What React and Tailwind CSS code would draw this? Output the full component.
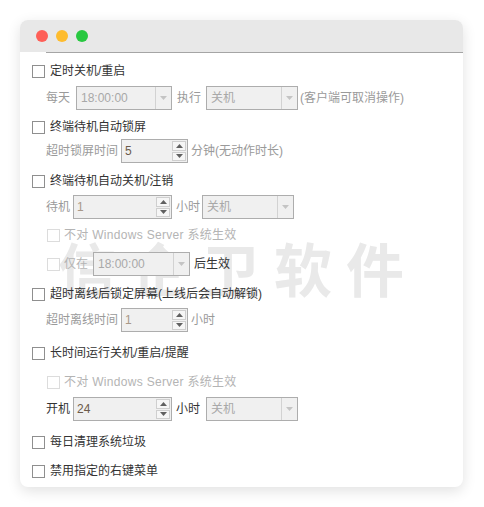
const font = { fontFamily: '"Liberation Sans", "Noto Sans CJK SC", sans-serif' };

function Check({ disabled = false }) {
  return (
    <span
      className={`inline-block w-[13px] h-[13px] shrink-0 border bg-white ${
        disabled ? "border-[#dcdcdc]" : "border-[#8f8f8f]"
      }`}
    />
  );
}

function Arrow({ up = false, color = "#b5b5b5" }) {
  return (
    <svg width="7" height="4" viewBox="0 0 7 4" className="block">
      <path d={up ? "M0 4 L3.5 0 L7 4 Z" : "M0 0 L7 0 L3.5 4 Z"} fill={color} />
    </svg>
  );
}

function Select({ value, width }) {
  return (
    <div
      className="flex h-[24px] items-stretch border border-[#adadad] bg-[#f0f0f0]"
      style={{ width }}
    >
      <div className="flex flex-1 items-center pl-[4px] text-[12px] text-[#a8a8a8]">{value}</div>
      <div className="flex w-[16px] items-center justify-center border-l border-[#d2d2d2]">
        <Arrow color="#c4c4c4" />
      </div>
    </div>
  );
}

function Spin({ value, width, dark = false }) {
  return (
    <div
      className="flex h-[24px] items-stretch border border-[#adadad] bg-[#f0f0f0]"
      style={{ width }}
    >
      <div
        className={`flex flex-1 items-center pl-[3px] text-[12px] ${
          dark ? "text-[#6b5a4a]" : "text-[#a89888]"
        }`}
      >
        {value}
      </div>
      <div className="flex w-[15px] flex-col justify-center gap-[1px] py-[1px] pr-[1px]">
        <div className="flex flex-1 items-center justify-center border border-[#cfcfcf] bg-[#f6f6f6]">
          <Arrow up color="#606060" />
        </div>
        <div className="flex flex-1 items-center justify-center border border-[#cfcfcf] bg-[#f6f6f6]">
          <Arrow color="#606060" />
        </div>
      </div>
    </div>
  );
}

function CheckRow({ label, className = "" }) {
  return (
    <div className={`flex h-[24px] items-center pl-[12px] ${className}`}>
      <Check />
      <span className="ml-[5px] text-[12px] text-[#333]">{label}</span>
    </div>
  );
}

function SubCheck({ label, className = "" }) {
  return (
    <div className={`flex h-[24px] items-center pl-[27px] ${className}`}>
      <Check disabled />
      <span className="ml-[4px] text-[12px] tracking-[0.3px] text-[#b4b4b4]">{label}</span>
    </div>
  );
}

export default function App() {
  return (
    <div className="min-h-[507px] w-[484px] bg-white pt-[20px] pl-[20px]" style={font}>
      <div className="relative w-[443px] overflow-hidden rounded-[8px] bg-white shadow-[0_4px_14px_rgba(0,0,0,0.12)]">
        {/* title bar */}
        <div className="flex h-[32px] items-center gap-[8px] bg-[#e8e8e8] pl-[16px]">
          <span className="h-[12px] w-[12px] rounded-full bg-[#fe5f57]" />
          <span className="h-[12px] w-[12px] rounded-full bg-[#febc2e]" />
          <span className="h-[12px] w-[12px] rounded-full bg-[#28c840]" />
        </div>
        <div className="ml-[26px] h-px bg-[#a5a5a5]" />

        {/* watermark */}
        <div
          className="pointer-events-none absolute left-[38px] top-[218px] select-none whitespace-nowrap text-[58px] font-bold leading-none tracking-[14px] text-[#e9e9e9]"
          style={{ fontFamily: '"Noto Sans CJK SC", sans-serif' }}
        >
          信企卫软件
        </div>

        <div className="relative flex flex-col pb-[4px] pt-[6px]">
          <CheckRow label="定时关机/重启" />

          <div className="mt-[3px] flex h-[24px] items-center pl-[26px] text-[12px] text-[#9a9a9a]">
            <span>每天</span>
            <div className="ml-[6px]">
              <Select value="18:00:00" width={96} />
            </div>
            <span className="ml-[5px]">执行</span>
            <div className="ml-[5px]">
              <Select value="关机" width={92} />
            </div>
            <span className="ml-[2px]">(客户端可取消操作)</span>
          </div>

          <CheckRow label="终端待机自动锁屏" className="mt-[5px]" />

          <div className="flex h-[24px] items-center pl-[26px] text-[12px] text-[#9a9a9a]">
            <span>超时锁屏时间</span>
            <div className="ml-[3px]">
              <Spin value="5" width={67} dark />
            </div>
            <span className="ml-[3px]">分钟(无动作时长)</span>
          </div>

          <CheckRow label="终端待机自动关机/注销" className="mt-[6px]" />

          <div className="mt-[2px] flex h-[24px] items-center pl-[26px] text-[12px] text-[#9a9a9a]">
            <span>待机</span>
            <div className="ml-[3px]">
              <Spin value="1" width={99} />
            </div>
            <span className="ml-[4px]">小时</span>
            <div className="ml-[2px]">
              <Select value="关机" width={92} />
            </div>
          </div>

          <SubCheck label="不对 Windows Server 系统生效" className="mt-[4px]" />

          <div className="mt-[5px] flex h-[24px] items-center pl-[27px] text-[12px]">
            <Check disabled />
            <span className="ml-[4px] text-[#b4b4b4]">仅在</span>
            <div className="ml-[5px]">
              <Select value="18:00:00" width={97} />
            </div>
            <span className="ml-[4px] text-[#333]">后生效</span>
          </div>

          <CheckRow label="超时离线后锁定屏幕(上线后会自动解锁)" className="mt-[6px]" />

          <div className="mt-[2px] flex h-[24px] items-center pl-[26px] text-[12px] text-[#9a9a9a]">
            <span>超时离线时间</span>
            <div className="ml-[3px]">
              <Spin value="1" width={67} />
            </div>
            <span className="ml-[3px]">小时</span>
          </div>

          <CheckRow label="长时间运行关机/重启/提醒" className="mt-[9px]" />

          <SubCheck label="不对 Windows Server 系统生效" className="mt-[5px]" />

          <div className="mt-[3px] flex h-[24px] items-center pl-[26px] text-[12px] text-[#333]">
            <span>开机</span>
            <div className="ml-[3px]">
              <Spin value="24" width={99} dark />
            </div>
            <span className="ml-[4px]">小时</span>
            <div className="ml-[6px]">
              <Select value="关机" width={92} />
            </div>
          </div>

          <CheckRow label="每日清理系统垃圾" className="mt-[9px]" />
          <CheckRow label="禁用指定的右键菜单" className="mt-[5px]" />
        </div>
      </div>
    </div>
  );
}
